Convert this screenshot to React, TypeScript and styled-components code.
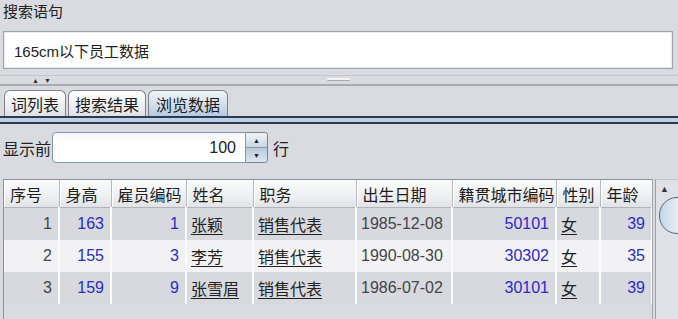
import React from "react";
import styled, { createGlobalStyle } from "styled-components";

const GlobalStyle = createGlobalStyle`
    html, body {
        margin: 0;
        padding: 0;
        background: #d9dbe1;
        overflow: hidden;
    }
    body {
        font-family: "Liberation Sans", "Noto Sans CJK SC", sans-serif;
        color: #222;
    }
`;

const Page = styled.div`
    width: 678px;
    height: 319px;
    overflow: hidden;
    display: flex;
    flex-direction: column;
`;

const QueryBlock = styled.div`
    padding: 2px 5px 0 3px;
`;
const Label = styled.div`
    font-size: 15px;
    line-height: 20px;
    height: 20px;
`;
const QueryField = styled.div`
    margin-top: 9px;
    height: 36px;
    border: 1px solid #9ea2a9;
    background: #fff;
    display: flex;
    align-items: center;
    padding-left: 10px;
    font-size: 15px;
    box-shadow: inset 0 0 0 1px #e8e9ec;
`;

const Splitter = styled.div`
    margin-top: 6px;
    height: 9px;
    border-top: 1px solid #c3c6cc;
    border-bottom: 2px solid #a7abb2;
    position: relative;
    display: flex;
    align-items: center;
    padding-left: 32px;
    gap: 5px;
`;
const Arrow = styled.span`
    font-size: 7px;
    line-height: 7px;
    color: #333;
`;
const Grip = styled.span`
    position: absolute;
    left: 327px;
    top: 2px;
    width: 23px;
    height: 2px;
    background: #f4f4f6;
    border-bottom: 1px solid #a4a8af;
    border-radius: 1px;
`;

const TabBar = styled.div`
    margin-top: 4px;
    display: flex;
    gap: 2px;
    padding-left: 4px;
    height: 27px;
`;
const Tab = styled.div<{ $active?: boolean }>`
    padding: 0 ${(p) => (p.$active ? "7px" : "6px")};
    border: 1px solid #7c828b;
    border-bottom: none;
    border-radius: 6px 6px 0 0;
    background: ${(p) =>
        p.$active
            ? "linear-gradient(#f1f5f9, #d6e2ee 45%, #b4cbe0)"
            : "linear-gradient(#ffffff, #f1f2f4 50%, #dfe1e5)"};
    display: flex;
    align-items: center;
    font-size: 16px;
    padding-top: 1px;
    color: #1c1c1c;
`;
const TabBand = styled.div`
    height: 4px;
    border-top: 2px solid #2f3b4c;
    border-bottom: 2px solid #2f3b4c;
    background: #b9d0e8;
`;

const Content = styled.div`
    padding: 8px 0 0 3px;
    display: flex;
    flex-direction: column;
`;
const SpinnerRow = styled.div`
    display: flex;
    align-items: center;
    height: 31px;
`;
const RowLabel = styled.span`
    font-size: 16px;
    width: 49px;
`;
const SpinInput = styled.div`
    width: 194px;
    height: 31px;
    border: 1px solid #7d98b3;
    border-radius: 4px 0 0 4px;
    background: linear-gradient(#f4f6f8, #ffffff 30%);
    display: flex;
    align-items: center;
    justify-content: flex-end;
    padding-right: 9px;
    box-sizing: border-box;
    font-size: 16px;
`;
const SpinButtons = styled.div`
    width: 22px;
    height: 31px;
    box-sizing: border-box;
    border: 1px solid #7a8594;
    border-left: none;
    border-radius: 0 4px 4px 0;
    display: flex;
    flex-direction: column;
    overflow: hidden;
`;
const SpinButton = styled.div<{ $down?: boolean }>`
    flex: 1;
    display: flex;
    align-items: center;
    justify-content: center;
    font-size: 7px;
    color: #222;
    background: ${(p) =>
        p.$down ? "linear-gradient(#b9cadb, #dbe5ee)" : "linear-gradient(#f1f4f7, #c9d6e3)"};
    border-top: ${(p) => (p.$down ? "1px solid #8d9aa8" : "none")};
`;
const RowUnit = styled.span`
    font-size: 16px;
    margin-left: 5px;
`;

const TableArea = styled.div`
    margin-top: 16px;
    display: flex;
    height: 140px;
`;
const Viewport = styled.div`
    flex: none;
    width: 648px;
    border-left: 1px solid #8e9298;
    border-top: 1px solid #8e9298;
    border-right: 1px solid #a3a7ad;
    overflow: hidden;
`;
const Grid = styled.table`
    border-collapse: collapse;
    table-layout: fixed;
    width: 648px;
    font-size: 16px;
`;
const HeadCell = styled.th`
    height: 27px;
    padding: 0 0 0 6px;
    text-align: left;
    font-weight: normal;
    color: #1e1e1e;
    background: linear-gradient(#fbfbfc, #eeeff1 60%, #e2e3e6);
    border-right: 1px solid #b6b9bf;
    border-bottom: 1px solid #b0b3b9;
    box-shadow: inset 1px 0 0 #ffffff;
    white-space: nowrap;
    overflow: hidden;
`;
const BodyRow = styled.tr<{ $light?: boolean }>`
    background: ${(p) => (p.$light ? "#f2f2f4" : "#d7d9df")};
`;
const Cell = styled.td<{ $num?: boolean; $blue?: boolean; $link?: boolean }>`
    height: 32px;
    padding: ${(p) => (p.$num ? "0 6px 0 0" : "0 0 0 4px")};
    text-align: ${(p) => (p.$num ? "right" : "left")};
    color: ${(p) => (p.$blue ? "#2b2bc6" : p.$link ? "#222" : "#444")};
    text-decoration: ${(p) => (p.$link ? "underline" : "none")};
    text-underline-offset: 3px;
    border-right: 2px solid #fbfbfb;
    white-space: nowrap;
    overflow: hidden;
`;

const ScrollBar = styled.div`
    margin-left: 2px;
    flex: 1;
    min-width: 0;
    overflow: hidden;
    border-left: 1px solid #9ba0a8;
    border-top: 1px solid #c2c5ca;
    background: #dfe1e6;
    display: flex;
    flex-direction: column;
`;
const ScrollArrow = styled.div`
    height: 17px;
    padding-left: 4px;
    display: flex;
    align-items: center;
    font-size: 9px;
    color: #333;
`;
const Thumb = styled.div`
    flex: none;
    margin-left: 3px;
    width: 36px;
    height: 37px;
    box-sizing: border-box;
    border: 1px solid #56667a;
    border-radius: 18px;
    background: linear-gradient(90deg, #c7d7e6, #e4ecf4 50%, #cbdae8);
`;

type Row = {
    no: number;
    height: number;
    id: number;
    name: string;
    title: string;
    birth: string;
    city: number;
    sex: string;
    age: number;
};

const rows: Row[] = [
    { no: 1, height: 163, id: 1, name: "张颖", title: "销售代表", birth: "1985-12-08", city: 50101, sex: "女", age: 39 },
    { no: 2, height: 155, id: 3, name: "李芳", title: "销售代表", birth: "1990-08-30", city: 30302, sex: "女", age: 35 },
    { no: 3, height: 159, id: 9, name: "张雪眉", title: "销售代表", birth: "1986-07-02", city: 30101, sex: "女", age: 39 },
];

const columns = [
    { title: "序号", width: 55 },
    { title: "身高", width: 52 },
    { title: "雇员编码", width: 75 },
    { title: "姓名", width: 67 },
    { title: "职务", width: 103 },
    { title: "出生日期", width: 96 },
    { title: "籍贯城市编码", width: 104 },
    { title: "性别", width: 44 },
    { title: "年龄", width: 52 },
];

export default function App() {
    return (
        <Page>
            <GlobalStyle />
            <QueryBlock>
                <Label>搜索语句</Label>
                <QueryField>165cm以下员工数据</QueryField>
            </QueryBlock>
            <Splitter>
                <Arrow>▲</Arrow>
                <Arrow>▼</Arrow>
                <Grip />
            </Splitter>
            <TabBar>
                <Tab>词列表</Tab>
                <Tab>搜索结果</Tab>
                <Tab $active>浏览数据</Tab>
            </TabBar>
            <TabBand />
            <Content>
                <SpinnerRow>
                    <RowLabel>显示前</RowLabel>
                    <SpinInput>100</SpinInput>
                    <SpinButtons>
                        <SpinButton>▲</SpinButton>
                        <SpinButton $down>▼</SpinButton>
                    </SpinButtons>
                    <RowUnit>行</RowUnit>
                </SpinnerRow>
                <TableArea>
                    <Viewport>
                        <Grid>
                            <colgroup>
                                {columns.map((c) => (
                                    <col key={c.title} style={{ width: c.width }} />
                                ))}
                            </colgroup>
                            <thead>
                                <tr>
                                    {columns.map((c) => (
                                        <HeadCell key={c.title}>{c.title}</HeadCell>
                                    ))}
                                </tr>
                            </thead>
                            <tbody>
                                {rows.map((r, i) => (
                                    <BodyRow key={r.no} $light={i % 2 === 1}>
                                        <Cell $num>{r.no}</Cell>
                                        <Cell $num $blue>{r.height}</Cell>
                                        <Cell $num $blue>{r.id}</Cell>
                                        <Cell $link>{r.name}</Cell>
                                        <Cell $link>{r.title}</Cell>
                                        <Cell>{r.birth}</Cell>
                                        <Cell $num $blue>{r.city}</Cell>
                                        <Cell $link>{r.sex}</Cell>
                                        <Cell $num $blue>{r.age}</Cell>
                                    </BodyRow>
                                ))}
                            </tbody>
                        </Grid>
                    </Viewport>
                    <ScrollBar>
                        <ScrollArrow>▲</ScrollArrow>
                        <Thumb />
                    </ScrollBar>
                </TableArea>
            </Content>
        </Page>
    );
}
